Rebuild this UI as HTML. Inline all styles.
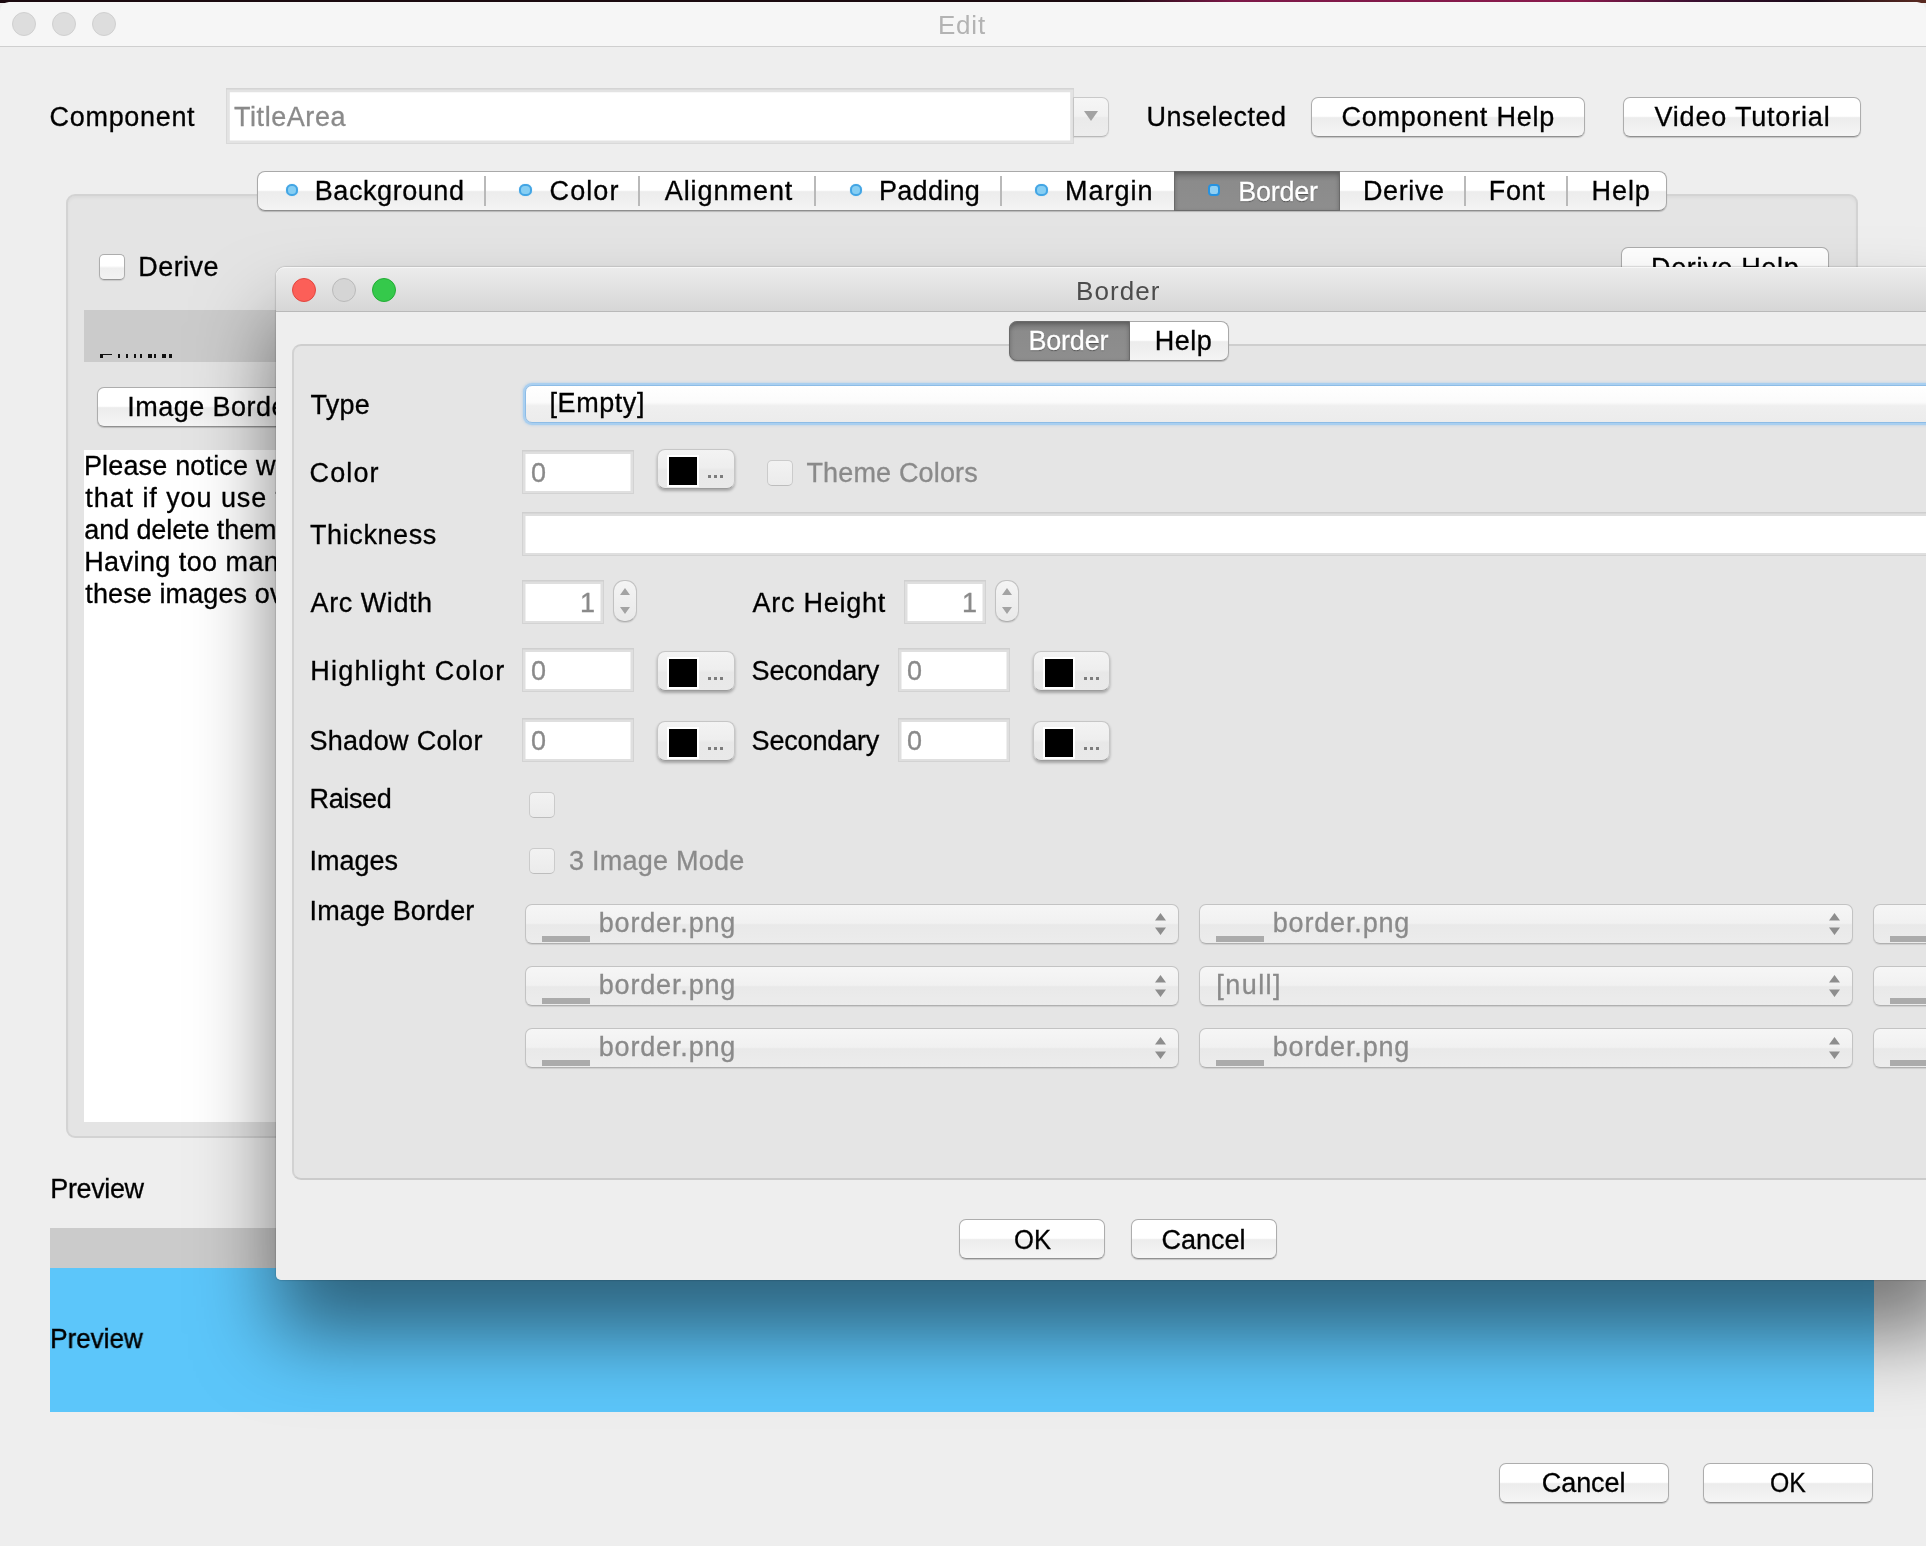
<!DOCTYPE html>
<html><head><meta charset="utf-8"><title>Edit</title>
<style>
html,body{margin:0;padding:0}
body{width:1926px;height:1546px;overflow:hidden;background:#eeeeee;position:relative;font-family:"Liberation Sans",sans-serif}
#win,#dlg{position:absolute;left:0;top:0;width:1926px;height:1546px;overflow:hidden;will-change:transform}
#win div,#dlg div,.t{position:absolute;box-sizing:border-box}
.t{white-space:pre;margin:0;padding:0}
/* desktop strip + window title bar */
.strip{background:linear-gradient(90deg,#1b0a10 0,#1b0a10 58%,#7d1848 64%,#8a1a4c 82%,#3a1030 88%,#1a0a18 94%,#5a2a20 100%)}
.titlebar{background:#f6f6f6;border-bottom:1.5px solid #cfcfcf;border-radius:9px 9px 0 0}
.tl{border-radius:50%;background:#dddddd;border:1px solid #d0d0d0}
/* push button */
.btn{border-radius:7px;border:1px solid #adadad;border-bottom-color:#919191;background:linear-gradient(#ffffff 0,#ffffff 48%,#ececec 52%,#f5f5f5 100%);box-shadow:0 1px 1px rgba(0,0,0,.18)}
/* text field */
.field{background:#fff;box-shadow:inset 0 1.5px 0 0 #cfcfcf,inset 0 0 0 1px #d3d3d3,inset 0 0.4px 0 3.5px #dfdfdf}
.fieldw{background:#fff;box-shadow:inset 0 1.5px 0 0 #d4d4d4,inset 0 0 0 1px #d9d9d9,inset 0 0.4px 0 3.8px #e3e3e3}
/* tabbed pane content */
.pane{background:#e4e4e4;border:2px solid #d3d3d3;border-radius:9px;box-shadow:inset 0 2px 3px rgba(0,0,0,.04)}
.pane2{background:#e5e5e5;border:2px solid #d2d2d2;border-top-color:#cecece;border-bottom-color:#cbcbcb;border-radius:9px}
/* segmented tabs */
.seg{border-radius:8px;border:1px solid #a9a9a9;border-bottom-color:#8e8e8e;background:linear-gradient(#ffffff 0,#ffffff 48%,#ececec 52%,#f4f4f4 100%);box-shadow:0 1px 1px rgba(0,0,0,.2)}
.segsel{background:linear-gradient(#7a7a7a 0,#8b8b8b 25%,#8e8e8e 100%);border:1px solid #6a6a6a;box-shadow:inset 0 2px 4px rgba(0,0,0,.25)}
.sep{background:#b9b9b9;width:2px}
.dot{border-radius:45%;background:#86cef3;border:2.5px solid #43a5e4;box-shadow:0 0 1px #8cc9ef}
.ink{background:#111}
.dotsel{border-radius:4px;background:#8fd0f4;border:2px solid #2692e0}
/* checkbox */
.cb{border-radius:5px;border:1px solid #adadad;border-bottom-color:#969696;background:linear-gradient(#ffffff 0,#ffffff 45%,#eeeeee 55%,#f3f3f3 100%);box-shadow:0 1px 1px rgba(0,0,0,.12)}
.cbd{border-radius:5px;border:1px solid #cbcbcb;border-bottom-color:#bdbdbd;background:linear-gradient(#f2f2f2,#ebebeb)}
/* misc */
.grey{background:#cbcbcb}
.white{background:#fff}
.blue{background:#5cc6fa}
/* dialog */
#dlgshadow{position:absolute;left:276px;top:267px;width:1682px;height:1013px;border-radius:9px 9px 5px 5px;box-shadow:0 54px 80px 0 rgba(0,0,0,.5),0 0 2px rgba(0,0,0,.4)}
.dwin{background:#eeeeee;border-radius:9px 9px 5px 5px;overflow:hidden}
.dtitle{background:linear-gradient(#ececec,#d6d6d6);border-bottom:1px solid #b9b9b9;border-top:1px solid #f7f7f7;border-radius:9px 9px 0 0}
.tlr{border-radius:50%;background:#fc5f58;border:1px solid #e2463f}
.tly{border-radius:50%;background:#d5d5d5;border:1px solid #bababa}
.tlg{border-radius:50%;background:#35c94b;border:1px solid #23ad35}
/* combos */
.combo{border-radius:7px;border:1px solid #c3c3c3;border-bottom-color:#b0b0b0;background:linear-gradient(#f6f6f6 0,#f1f1f1 48%,#e9e9e9 52%,#ececec 100%);box-shadow:0 1px 1px rgba(0,0,0,.10)}
.combofocus{border-radius:7px;border:1px solid #8dbce6;background:linear-gradient(#ffffff 0,#fbfbfb 45%,#efefef 55%,#ececec 100%);box-shadow:0 0 0 2px #a9cff0,0 0 3px 2px rgba(120,180,235,.55)}
.icon{background:#ababab}
.cbtn{border-radius:8px;border:1px solid #c6c6c6;border-bottom-color:#9c9c9c;background:linear-gradient(#f3f3f3 0,#eeeeee 46%,#e8e8e8 54%,#e9e9e9 100%);box-shadow:0 2px 3px rgba(0,0,0,.28)}
.sw{background:#000;border:2px solid #fff}
.d3{background:#7c7c7c;width:3px;height:3px}
.step{border-radius:11px;border:1px solid #c2c2c2;border-bottom-color:#b0b0b0;background:linear-gradient(#f4f4f4,#e9e9e9);box-shadow:0 1px 1px rgba(0,0,0,.10)}
.arrowbtn{border-radius:0 7px 7px 0;border:1px solid #c9c9c9;border-bottom-color:#b9b9b9;border-left:1px solid #c4c4c4;background:linear-gradient(#f6f6f6 0,#f1f1f1 48%,#eaeaea 52%,#ededed 100%);box-shadow:0 1px 1px rgba(0,0,0,.08)}
svg{position:absolute;overflow:visible}

</style></head>
<body>
<div id="win">
<div class="strip" style="left:0px;top:0px;width:1926px;height:3px;"></div>
<div class="titlebar" style="left:0px;top:2px;width:1926px;height:44.5px;"></div>
<div class="tl" style="left:12px;top:12px;width:24px;height:24px;"></div>
<div class="tl" style="left:52px;top:12px;width:24px;height:24px;"></div>
<div class="tl" style="left:92px;top:12px;width:24px;height:24px;"></div>
<span class="t" style="left:938.0px;top:11.7px;font-size:26px;line-height:26px;letter-spacing:0.77px;color:#b3b3b3;">Edit</span>
<span class="t" style="left:49.6px;top:104.1px;font-size:27px;line-height:27px;letter-spacing:0.68px;-webkit-text-stroke:0.3px;color:#000;">Component</span>
<div class="fieldw" style="left:226px;top:88px;width:848px;height:56px;"></div>
<span class="t" style="left:234.0px;top:104.1px;font-size:27px;line-height:27px;letter-spacing:0.56px;-webkit-text-stroke:0.3px;color:#8a8a8a;">TitleArea</span>
<div class="arrowbtn" style="left:1073px;top:97px;width:35.5px;height:40px;"></div>
<svg style="left:1084px;top:111px" width="14" height="10"><path d="M0 0H14L7 10Z" fill="#a2a2a2"/></svg>
<span class="t" style="left:1146.6px;top:104.1px;font-size:27px;line-height:27px;letter-spacing:0.47px;-webkit-text-stroke:0.3px;color:#000;">Unselected</span>
<div class="btn" style="left:1311px;top:97px;width:274px;height:40px;"></div>
<span class="t" style="left:1341.4px;top:104.1px;font-size:27px;line-height:27px;letter-spacing:0.79px;-webkit-text-stroke:0.3px;color:#000;">Component Help</span>
<div class="btn" style="left:1623px;top:97px;width:238px;height:40px;"></div>
<span class="t" style="left:1654.4px;top:104.1px;font-size:27px;line-height:27px;letter-spacing:0.82px;-webkit-text-stroke:0.3px;color:#000;">Video Tutorial</span>
<div class="pane" style="left:66px;top:194px;width:1792px;height:944px;"></div>
<div class="seg" style="left:257px;top:171px;width:1410px;height:40px;"></div>
<div class="segsel" style="left:1174px;top:171px;width:166px;height:40px;"></div>
<div class="sep" style="left:484px;top:176px;width:2px;height:30px;"></div>
<div class="sep" style="left:638px;top:176px;width:2px;height:30px;"></div>
<div class="sep" style="left:814px;top:176px;width:2px;height:30px;"></div>
<div class="sep" style="left:1000px;top:176px;width:2px;height:30px;"></div>
<div class="sep" style="left:1464px;top:176px;width:2px;height:30px;"></div>
<div class="sep" style="left:1566px;top:176px;width:2px;height:30px;"></div>
<div class="dot" style="left:285.8px;top:183.8px;width:12.399999999999977px;height:12.399999999999977px;"></div>
<div class="dot" style="left:519.3px;top:183.8px;width:12.400000000000091px;height:12.399999999999977px;"></div>
<div class="dot" style="left:849.8px;top:183.8px;width:12.400000000000091px;height:12.399999999999977px;"></div>
<div class="dot" style="left:1035.3px;top:183.8px;width:12.400000000000091px;height:12.399999999999977px;"></div>
<div class="dotsel" style="left:1208px;top:184px;width:12px;height:12px;"></div>
<span class="t" style="left:314.8px;top:178.1px;font-size:27px;line-height:27px;letter-spacing:0.56px;-webkit-text-stroke:0.3px;color:#000;">Background</span>
<span class="t" style="left:549.6px;top:178.1px;font-size:27px;line-height:27px;letter-spacing:1.07px;-webkit-text-stroke:0.3px;color:#000;">Color</span>
<span class="t" style="left:664.7px;top:178.1px;font-size:27px;line-height:27px;letter-spacing:0.95px;-webkit-text-stroke:0.3px;color:#000;">Alignment</span>
<span class="t" style="left:879.0px;top:178.1px;font-size:27px;line-height:27px;letter-spacing:0.30px;-webkit-text-stroke:0.3px;color:#000;">Padding</span>
<span class="t" style="left:1065.0px;top:178.1px;font-size:27px;line-height:27px;letter-spacing:1.00px;-webkit-text-stroke:0.3px;color:#000;">Margin</span>
<span class="t" style="left:1238.3px;top:178.6px;font-size:27px;line-height:27px;letter-spacing:-0.26px;-webkit-text-stroke:0.3px;color:#fff;text-shadow:0 1px 1px rgba(0,0,0,.45);">Border</span>
<span class="t" style="left:1362.9px;top:178.1px;font-size:27px;line-height:27px;letter-spacing:0.62px;-webkit-text-stroke:0.3px;color:#000;">Derive</span>
<span class="t" style="left:1488.8px;top:178.1px;font-size:27px;line-height:27px;letter-spacing:0.63px;-webkit-text-stroke:0.3px;color:#000;">Font</span>
<span class="t" style="left:1591.6px;top:178.1px;font-size:27px;line-height:27px;letter-spacing:0.90px;-webkit-text-stroke:0.3px;color:#000;">Help</span>
<div class="cb" style="left:99px;top:254px;width:26px;height:26px;"></div>
<span class="t" style="left:138.3px;top:254.3px;font-size:27px;line-height:27px;letter-spacing:0.42px;-webkit-text-stroke:0.3px;color:#000;">Derive</span>
<div class="btn" style="left:1621px;top:247px;width:208px;height:40px;"></div>
<span class="t" style="left:1651.0px;top:255.1px;font-size:27px;line-height:27px;letter-spacing:0.66px;-webkit-text-stroke:0.3px;color:#000;">Derive Help</span>
<div class="grey" style="left:84px;top:310px;width:1756px;height:52px;"></div>
<div class="ink" style="left:99.8px;top:354px;width:12.700000000000003px;height:1.3999999999999773px;"></div>
<div class="ink" style="left:99.8px;top:354px;width:3.200000000000003px;height:4px;"></div>
<div class="ink" style="left:117.6px;top:354px;width:2.4000000000000057px;height:4px;"></div>
<div class="ink" style="left:125.6px;top:354px;width:2.5999999999999943px;height:4px;"></div>
<div class="ink" style="left:133.6px;top:354px;width:2.5999999999999943px;height:4px;"></div>
<div class="ink" style="left:139.8px;top:354px;width:2.5999999999999943px;height:4px;"></div>
<div class="ink" style="left:148.2px;top:354px;width:3.8000000000000114px;height:4px;"></div>
<div class="ink" style="left:154px;top:354px;width:2.3000000000000114px;height:4px;"></div>
<div class="ink" style="left:162px;top:354px;width:3.5999999999999943px;height:4px;"></div>
<div class="ink" style="left:168.9px;top:354px;width:3.0999999999999943px;height:4px;"></div>
<div class="btn" style="left:97px;top:387px;width:303px;height:40px;"></div>
<span class="t" style="left:127.3px;top:394.1px;font-size:27px;line-height:27px;letter-spacing:0.46px;-webkit-text-stroke:0.3px;color:#000;">Image Border</span>
<div class="white" style="left:84px;top:450px;width:1756px;height:672px;"></div>
<span class="t" style="left:83.9px;top:452.6px;font-size:27px;line-height:27px;letter-spacing:0.17px;-webkit-text-stroke:0.3px;color:#000;">Please notice when</span>
<span class="t" style="left:85.3px;top:484.8px;font-size:27px;line-height:27px;letter-spacing:0.92px;-webkit-text-stroke:0.3px;color:#000;">that if you use the</span>
<span class="t" style="left:84.3px;top:516.9px;font-size:27px;line-height:27px;letter-spacing:-0.10px;-webkit-text-stroke:0.3px;color:#000;">and delete them</span>
<span class="t" style="left:84.2px;top:549.1px;font-size:27px;line-height:27px;letter-spacing:0.43px;-webkit-text-stroke:0.3px;color:#000;">Having too many</span>
<span class="t" style="left:85.3px;top:581.2px;font-size:27px;line-height:27px;letter-spacing:0.11px;-webkit-text-stroke:0.3px;color:#000;">these images over</span>
<span class="t" style="left:50.3px;top:1176.1px;font-size:27px;line-height:27px;letter-spacing:-0.38px;-webkit-text-stroke:0.3px;color:#000;">Preview</span>
<div class="grey" style="left:50px;top:1228px;width:1824px;height:40px;"></div>
<div class="blue" style="left:50px;top:1268px;width:1824px;height:144px;"></div>
<span class="t" style="left:50.0px;top:1324.9px;font-size:28px;line-height:28px;transform-origin:2.00px 50%;transform:scaleX(0.9309);color:#000;-webkit-text-stroke:0.45px;filter:blur(0.35px);">Preview</span>
<div class="btn" style="left:1499px;top:1463px;width:170px;height:40px;"></div>
<span class="t" style="left:1541.8px;top:1470.4px;font-size:27px;line-height:27px;letter-spacing:-0.08px;-webkit-text-stroke:0.3px;color:#000;">Cancel</span>
<div class="btn" style="left:1703px;top:1463px;width:170px;height:40px;"></div>
<span class="t" style="left:1770.1px;top:1470.4px;font-size:27px;line-height:27px;transform-origin:1.00px 50%;transform:scaleX(0.9184);-webkit-text-stroke:0.3px;color:#000;">OK</span>
</div>
<div id="dlgshadow"></div>
<div id="dlg">
<div class="dwin" style="left:276px;top:267px;width:1682px;height:1013px;"></div>
<div class="dtitle" style="left:276px;top:267px;width:1682px;height:45px;"></div>
<div class="tlr" style="left:292px;top:278px;width:24px;height:24px;"></div>
<div class="tly" style="left:332px;top:278px;width:24px;height:24px;"></div>
<div class="tlg" style="left:372px;top:278px;width:24px;height:24px;"></div>
<span class="t" style="left:1076.0px;top:277.5px;font-size:26px;line-height:26px;letter-spacing:1.06px;color:#4c4c4c;">Border</span>
<div class="pane2" style="left:292px;top:344px;width:1650px;height:836px;"></div>
<div class="seg" style="left:1009px;top:321px;width:220px;height:40px;"></div>
<div class="segsel" style="left:1009px;top:321px;width:121px;height:40px;border-radius:8px 0 0 8px;"></div>
<span class="t" style="left:1028.4px;top:328.1px;font-size:27px;line-height:27px;letter-spacing:-0.18px;-webkit-text-stroke:0.3px;color:#fff;text-shadow:0 1px 1px rgba(0,0,0,.45);">Border</span>
<span class="t" style="left:1154.7px;top:328.1px;font-size:27px;line-height:27px;letter-spacing:0.53px;-webkit-text-stroke:0.3px;color:#000;">Help</span>
<span class="t" style="left:310.6px;top:392.1px;font-size:27px;line-height:27px;letter-spacing:0.23px;-webkit-text-stroke:0.3px;color:#000;">Type</span>
<div class="combofocus" style="left:525px;top:385px;width:1420px;height:38px;"></div>
<span class="t" style="left:549.5px;top:390.1px;font-size:27px;line-height:27px;letter-spacing:0.57px;-webkit-text-stroke:0.3px;color:#000;">[Empty]</span>
<span class="t" style="left:309.6px;top:460.1px;font-size:27px;line-height:27px;letter-spacing:1.10px;-webkit-text-stroke:0.3px;color:#000;">Color</span>
<div class="field" style="left:522px;top:450px;width:112px;height:44px;"></div>
<span class="t" style="left:531.0px;top:460.1px;font-size:27px;line-height:27px;-webkit-text-stroke:0.3px;color:#8a8a8a;">0</span>
<div class="cbtn" style="left:657.0px;top:449.0px;width:77.5px;height:39.5px;"></div>
<div class="sw" style="left:667.0px;top:454.5px;width:32.0px;height:32.0px;"></div>
<div class="d3" style="left:708.0px;top:474.5px;width:3.0px;height:3.0px;"></div>
<div class="d3" style="left:714.0px;top:474.5px;width:3.0px;height:3.0px;"></div>
<div class="d3" style="left:720.0px;top:474.5px;width:3.0px;height:3.0px;"></div>
<div class="cbd" style="left:767px;top:460px;width:26px;height:26px;"></div>
<span class="t" style="left:806.4px;top:460.1px;font-size:27px;line-height:27px;letter-spacing:0.16px;-webkit-text-stroke:0.3px;color:#8a8a8a;">Theme Colors</span>
<span class="t" style="left:310.0px;top:522.1px;font-size:27px;line-height:27px;letter-spacing:0.60px;-webkit-text-stroke:0.3px;color:#000;">Thickness</span>
<div class="field" style="left:522px;top:512px;width:1423px;height:44px;"></div>
<span class="t" style="left:310.6px;top:590.1px;font-size:27px;line-height:27px;letter-spacing:0.55px;-webkit-text-stroke:0.3px;color:#000;">Arc Width</span>
<div class="field" style="left:522px;top:580px;width:82px;height:44px;"></div>
<span class="t" style="left:580.0px;top:590.1px;font-size:27px;line-height:27px;-webkit-text-stroke:0.3px;color:#8a8a8a;">1</span>
<div class="step" style="left:613px;top:580px;width:24px;height:42px;"></div>
<svg style="left:620px;top:588px" width="10" height="26"><path d="M0 7H10L5 0Z M0 19H10L5 26Z" fill="#a3a3a3"/></svg>
<span class="t" style="left:752.6px;top:590.1px;font-size:27px;line-height:27px;letter-spacing:0.73px;-webkit-text-stroke:0.3px;color:#000;">Arc Height</span>
<div class="field" style="left:904px;top:580px;width:82px;height:44px;"></div>
<span class="t" style="left:962.0px;top:590.1px;font-size:27px;line-height:27px;-webkit-text-stroke:0.3px;color:#8a8a8a;">1</span>
<div class="step" style="left:995px;top:580px;width:24px;height:42px;"></div>
<svg style="left:1002px;top:588px" width="10" height="26"><path d="M0 7H10L5 0Z M0 19H10L5 26Z" fill="#a3a3a3"/></svg>
<span class="t" style="left:310.3px;top:658.4px;font-size:27px;line-height:27px;letter-spacing:1.20px;-webkit-text-stroke:0.3px;color:#000;">Highlight Color</span>
<div class="field" style="left:522px;top:648px;width:112px;height:44px;"></div>
<span class="t" style="left:531.0px;top:658.1px;font-size:27px;line-height:27px;-webkit-text-stroke:0.3px;color:#8a8a8a;">0</span>
<div class="cbtn" style="left:657.0px;top:651.0px;width:77.5px;height:40.0px;"></div>
<div class="sw" style="left:667.0px;top:656.5px;width:32.0px;height:32.0px;"></div>
<div class="d3" style="left:708.0px;top:676.5px;width:3.0px;height:3.0px;"></div>
<div class="d3" style="left:714.0px;top:676.5px;width:3.0px;height:3.0px;"></div>
<div class="d3" style="left:720.0px;top:676.5px;width:3.0px;height:3.0px;"></div>
<span class="t" style="left:751.6px;top:658.1px;font-size:27px;line-height:27px;letter-spacing:-0.17px;-webkit-text-stroke:0.3px;color:#000;">Secondary</span>
<div class="field" style="left:898px;top:648px;width:112px;height:44px;"></div>
<span class="t" style="left:907.0px;top:658.1px;font-size:27px;line-height:27px;-webkit-text-stroke:0.3px;color:#8a8a8a;">0</span>
<div class="cbtn" style="left:1032.5px;top:651.0px;width:77.5px;height:40.0px;"></div>
<div class="sw" style="left:1042.5px;top:656.5px;width:32.0px;height:32.0px;"></div>
<div class="d3" style="left:1083.5px;top:676.5px;width:3.0px;height:3.0px;"></div>
<div class="d3" style="left:1089.5px;top:676.5px;width:3.0px;height:3.0px;"></div>
<div class="d3" style="left:1095.5px;top:676.5px;width:3.0px;height:3.0px;"></div>
<span class="t" style="left:309.4px;top:728.1px;font-size:27px;line-height:27px;letter-spacing:0.31px;-webkit-text-stroke:0.3px;color:#000;">Shadow Color</span>
<div class="field" style="left:522px;top:718px;width:112px;height:44px;"></div>
<span class="t" style="left:531.0px;top:728.4px;font-size:27px;line-height:27px;-webkit-text-stroke:0.3px;color:#8a8a8a;">0</span>
<div class="cbtn" style="left:657.0px;top:721.0px;width:77.5px;height:40.0px;"></div>
<div class="sw" style="left:667.0px;top:726.5px;width:32.0px;height:32.0px;"></div>
<div class="d3" style="left:708.0px;top:746.5px;width:3.0px;height:3.0px;"></div>
<div class="d3" style="left:714.0px;top:746.5px;width:3.0px;height:3.0px;"></div>
<div class="d3" style="left:720.0px;top:746.5px;width:3.0px;height:3.0px;"></div>
<span class="t" style="left:751.6px;top:728.4px;font-size:27px;line-height:27px;letter-spacing:-0.17px;-webkit-text-stroke:0.3px;color:#000;">Secondary</span>
<div class="field" style="left:898px;top:718px;width:112px;height:44px;"></div>
<span class="t" style="left:907.0px;top:728.4px;font-size:27px;line-height:27px;-webkit-text-stroke:0.3px;color:#8a8a8a;">0</span>
<div class="cbtn" style="left:1032.5px;top:721.0px;width:77.5px;height:40.0px;"></div>
<div class="sw" style="left:1042.5px;top:726.5px;width:32.0px;height:32.0px;"></div>
<div class="d3" style="left:1083.5px;top:746.5px;width:3.0px;height:3.0px;"></div>
<div class="d3" style="left:1089.5px;top:746.5px;width:3.0px;height:3.0px;"></div>
<div class="d3" style="left:1095.5px;top:746.5px;width:3.0px;height:3.0px;"></div>
<span class="t" style="left:309.6px;top:785.8px;font-size:27px;line-height:27px;letter-spacing:-0.38px;-webkit-text-stroke:0.3px;color:#000;">Raised</span>
<div class="cbd" style="left:528.5px;top:792px;width:26.0px;height:26px;"></div>
<span class="t" style="left:309.6px;top:848.4px;font-size:27px;line-height:27px;letter-spacing:-0.04px;-webkit-text-stroke:0.3px;color:#000;">Images</span>
<div class="cbd" style="left:528.5px;top:848px;width:26.0px;height:26px;"></div>
<span class="t" style="left:569.0px;top:848.1px;font-size:27px;line-height:27px;letter-spacing:0.24px;-webkit-text-stroke:0.3px;color:#8a8a8a;">3 Image Mode</span>
<span class="t" style="left:309.6px;top:898.3px;font-size:27px;line-height:27px;letter-spacing:0.10px;-webkit-text-stroke:0.3px;color:#000;">Image Border</span>
<div class="combo" style="left:525px;top:904px;width:654px;height:40px;"></div>
<div class="icon" style="left:541.5px;top:936px;width:48.5px;height:5.5px;"></div>
<span class="t" style="left:598.7px;top:910.4px;font-size:27px;line-height:27px;letter-spacing:0.84px;-webkit-text-stroke:0.3px;color:#8a8a8a;">border.png</span>
<svg style="left:1155px;top:912.5px" width="11" height="22"><path d="M0 7.5H11L5.5 0Z M0 14.5H11L5.5 22Z" fill="#8d8d8d"/></svg>
<div class="combo" style="left:1199px;top:904px;width:654px;height:40px;"></div>
<div class="icon" style="left:1215.5px;top:936px;width:48.5px;height:5.5px;"></div>
<span class="t" style="left:1272.7px;top:910.4px;font-size:27px;line-height:27px;letter-spacing:0.84px;-webkit-text-stroke:0.3px;color:#8a8a8a;">border.png</span>
<svg style="left:1829px;top:912.5px" width="11" height="22"><path d="M0 7.5H11L5.5 0Z M0 14.5H11L5.5 22Z" fill="#8d8d8d"/></svg>
<div class="combo" style="left:1873px;top:904px;width:654px;height:40px;"></div>
<div class="icon" style="left:1889.5px;top:936px;width:48.5px;height:5.5px;"></div>
<span class="t" style="left:1946.7px;top:910.4px;font-size:27px;line-height:27px;letter-spacing:0.84px;-webkit-text-stroke:0.3px;color:#8a8a8a;">border.png</span>
<svg style="left:2503px;top:912.5px" width="11" height="22"><path d="M0 7.5H11L5.5 0Z M0 14.5H11L5.5 22Z" fill="#8d8d8d"/></svg>
<div class="combo" style="left:525px;top:966px;width:654px;height:40px;"></div>
<div class="icon" style="left:541.5px;top:998px;width:48.5px;height:5.5px;"></div>
<span class="t" style="left:598.7px;top:972.4px;font-size:27px;line-height:27px;letter-spacing:0.84px;-webkit-text-stroke:0.3px;color:#8a8a8a;">border.png</span>
<svg style="left:1155px;top:974.5px" width="11" height="22"><path d="M0 7.5H11L5.5 0Z M0 14.5H11L5.5 22Z" fill="#8d8d8d"/></svg>
<div class="combo" style="left:1199px;top:966px;width:654px;height:40px;"></div>
<span class="t" style="left:1216.3px;top:972.4px;font-size:27px;line-height:27px;letter-spacing:1.44px;-webkit-text-stroke:0.3px;color:#8a8a8a;">[null]</span>
<svg style="left:1829px;top:974.5px" width="11" height="22"><path d="M0 7.5H11L5.5 0Z M0 14.5H11L5.5 22Z" fill="#8d8d8d"/></svg>
<div class="combo" style="left:1873px;top:966px;width:654px;height:40px;"></div>
<div class="icon" style="left:1889.5px;top:998px;width:48.5px;height:5.5px;"></div>
<span class="t" style="left:1946.7px;top:972.4px;font-size:27px;line-height:27px;letter-spacing:0.84px;-webkit-text-stroke:0.3px;color:#8a8a8a;">border.png</span>
<svg style="left:2503px;top:974.5px" width="11" height="22"><path d="M0 7.5H11L5.5 0Z M0 14.5H11L5.5 22Z" fill="#8d8d8d"/></svg>
<div class="combo" style="left:525px;top:1028px;width:654px;height:40px;"></div>
<div class="icon" style="left:541.5px;top:1060px;width:48.5px;height:5.5px;"></div>
<span class="t" style="left:598.7px;top:1034.4px;font-size:27px;line-height:27px;letter-spacing:0.84px;-webkit-text-stroke:0.3px;color:#8a8a8a;">border.png</span>
<svg style="left:1155px;top:1036.5px" width="11" height="22"><path d="M0 7.5H11L5.5 0Z M0 14.5H11L5.5 22Z" fill="#8d8d8d"/></svg>
<div class="combo" style="left:1199px;top:1028px;width:654px;height:40px;"></div>
<div class="icon" style="left:1215.5px;top:1060px;width:48.5px;height:5.5px;"></div>
<span class="t" style="left:1272.7px;top:1034.4px;font-size:27px;line-height:27px;letter-spacing:0.84px;-webkit-text-stroke:0.3px;color:#8a8a8a;">border.png</span>
<svg style="left:1829px;top:1036.5px" width="11" height="22"><path d="M0 7.5H11L5.5 0Z M0 14.5H11L5.5 22Z" fill="#8d8d8d"/></svg>
<div class="combo" style="left:1873px;top:1028px;width:654px;height:40px;"></div>
<div class="icon" style="left:1889.5px;top:1060px;width:48.5px;height:5.5px;"></div>
<span class="t" style="left:1946.7px;top:1034.4px;font-size:27px;line-height:27px;letter-spacing:0.84px;-webkit-text-stroke:0.3px;color:#8a8a8a;">border.png</span>
<svg style="left:2503px;top:1036.5px" width="11" height="22"><path d="M0 7.5H11L5.5 0Z M0 14.5H11L5.5 22Z" fill="#8d8d8d"/></svg>
<div class="btn" style="left:959px;top:1219px;width:146px;height:40px;"></div>
<span class="t" style="left:1013.5px;top:1226.6px;font-size:27px;line-height:27px;transform-origin:1.00px 50%;transform:scaleX(0.9474);-webkit-text-stroke:0.3px;color:#000;">OK</span>
<div class="btn" style="left:1131px;top:1219px;width:146px;height:40px;"></div>
<span class="t" style="left:1161.5px;top:1226.6px;font-size:27px;line-height:27px;letter-spacing:0.00px;-webkit-text-stroke:0.3px;color:#000;">Cancel</span>
</div>
</body></html>
